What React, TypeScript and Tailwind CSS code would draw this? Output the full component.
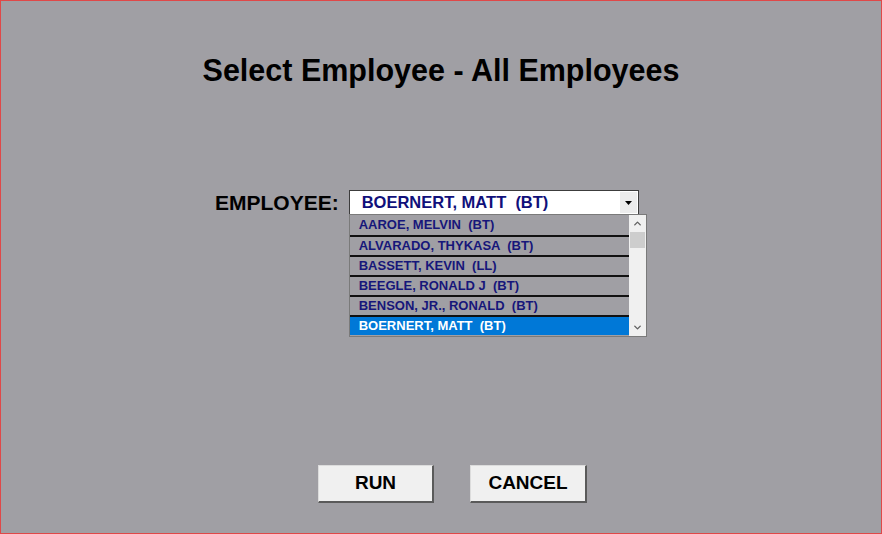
import { ChevronDown, ChevronUp } from "lucide-react";

const employees = [
  "AAROE, MELVIN  (BT)",
  "ALVARADO, THYKASA  (BT)",
  "BASSETT, KEVIN  (LL)",
  "BEEGLE, RONALD J  (BT)",
  "BENSON, JR., RONALD  (BT)",
  "BOERNERT, MATT  (BT)",
];

const selected = "BOERNERT, MATT  (BT)";

const App = () => {
  return (
    <div
      className="w-[882px] h-[534px] bg-[#a09fa4] border border-[#e04848] flex flex-col"
      style={{ fontFamily: '"Liberation Sans", Arial, sans-serif' }}
    >
      {/* title */}
      <h1 className="mt-[52px] text-center text-[30.5px] leading-[34px] font-bold text-black">
        Select Employee - All Employees
      </h1>

      {/* employee picker */}
      <div className="mt-[103px] ml-[214px] flex items-center">
        <span className="text-[21px] font-bold text-black leading-6 mr-[10px]">
          EMPLOYEE:
        </span>
        <div className="relative">
          <div className="w-[290px] h-[25px] bg-white border border-[#3c3c3c] flex items-center">
            <span className="flex-1 pl-[12px] text-[16.5px] font-bold text-[#10107a] whitespace-pre">
              {selected}
            </span>
            <div className="w-[17px] h-[21px] mr-[1px] bg-[#ececec] flex items-center justify-center">
              <svg width="7" height="4" viewBox="0 0 7 4">
                <path d="M0 0h7L3.5 4z" fill="#000" />
              </svg>
            </div>
          </div>

          {/* open list */}
          <div className="absolute left-0 top-[24px] w-[298px] h-[123px] border border-[#7a7a7a] bg-[#a09fa4] flex">
            <div className="flex-1 flex flex-col">
              {employees.map((emp, i) => (
                <div
                  key={emp}
                  className={
                    emp === selected
                      ? "h-[20px] flex items-center pl-[9px] bg-[#0078d7] text-white text-[13px] font-bold whitespace-pre border-t-2 border-[#111]"
                      : i === 0
                      ? "h-[20px] flex items-center pl-[9px] text-[#16167a] text-[13px] font-bold whitespace-pre"
                      : "h-[20px] flex items-center pl-[9px] text-[#16167a] text-[13px] font-bold whitespace-pre border-t-2 border-[#111]"
                  }
                >
                  {emp}
                </div>
              ))}
            </div>
            <div className="w-[17px] bg-[#f0f0f0] flex flex-col items-center">
              <div className="h-[17px] flex items-center justify-center">
                <ChevronUp size={11} strokeWidth={3} color="#606060" />
              </div>
              <div className="w-[15px] h-[16px] bg-[#cdcdcd]" />
              <div className="flex-1" />
              <div className="h-[17px] flex items-center justify-center">
                <ChevronDown size={11} strokeWidth={3} color="#606060" />
              </div>
            </div>
          </div>
        </div>
      </div>

      {/* buttons */}
      <div className="mt-auto mb-[30px] ml-[317px] flex gap-[36px]">
        <button className="w-[116px] h-[38px] bg-[#f0f0f0] border-t border-l border-[#dcdcdc] border-r-2 border-b-2 border-r-[#5a5a5a] border-b-[#5a5a5a] text-[19px] font-bold text-black">
          RUN
        </button>
        <button className="w-[117px] h-[38px] bg-[#f0f0f0] border-t border-l border-[#dcdcdc] border-r-2 border-b-2 border-r-[#5a5a5a] border-b-[#5a5a5a] text-[19px] font-bold text-black">
          CANCEL
        </button>
      </div>
    </div>
  );
};

export default App;
